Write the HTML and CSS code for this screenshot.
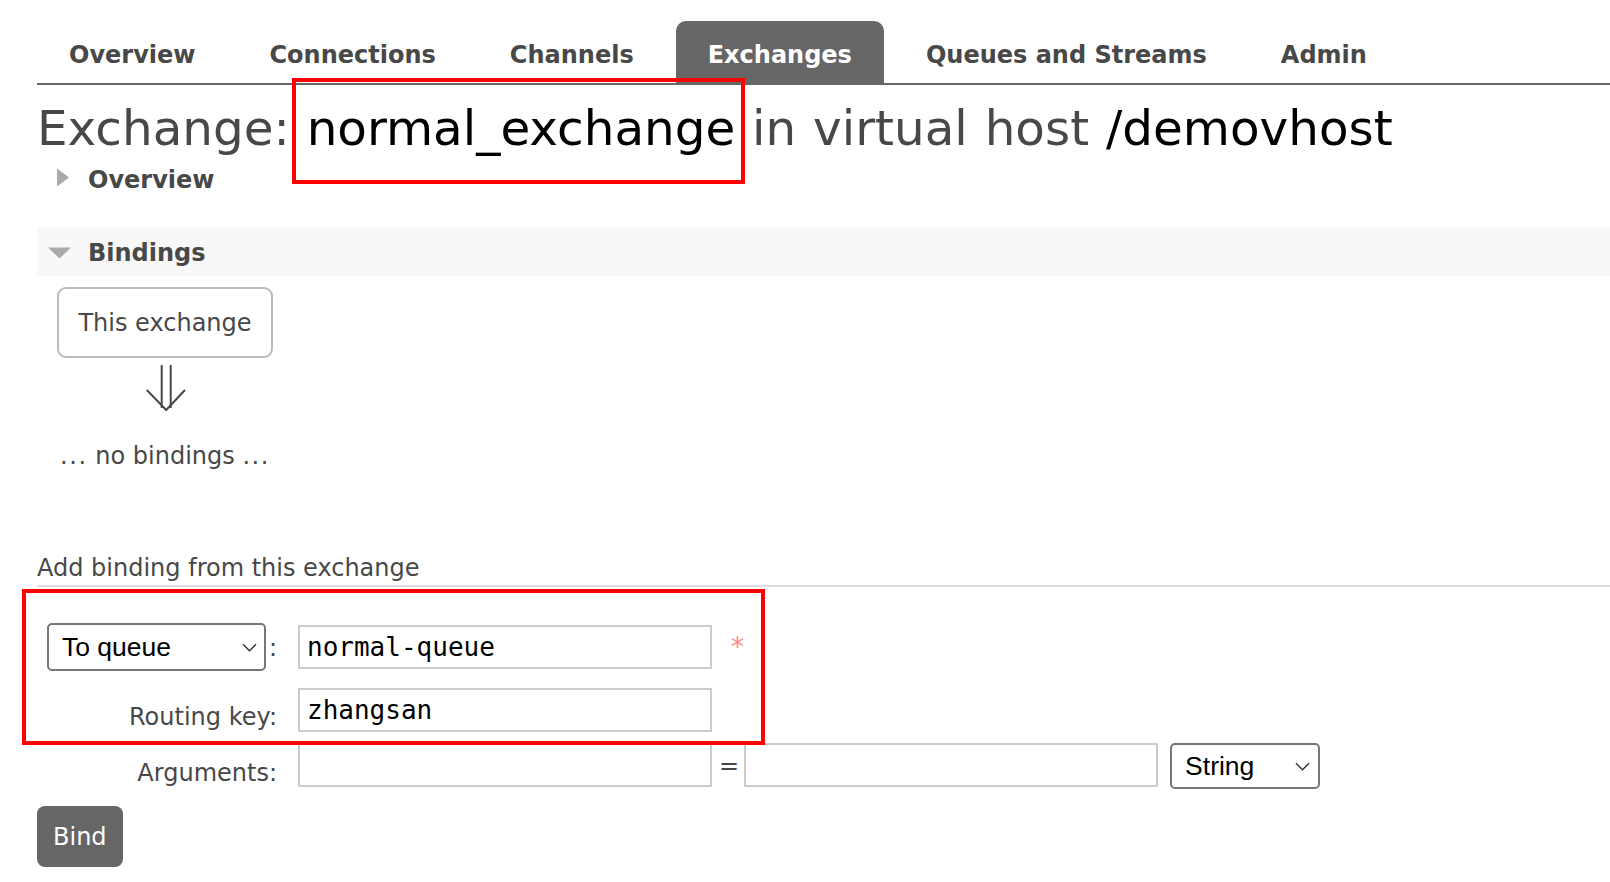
FILE: index.html
```html
<!DOCTYPE html>
<html lang="en">
<head>
<meta charset="utf-8">
<title>Exchange: normal_exchange</title>
<link rel="stylesheet" href="styles.css">
</head>
<body>
<div class="page">
  <nav class="tabs">
    <a class="tab">Overview</a>
    <a class="tab">Connections</a>
    <a class="tab">Channels</a>
    <a class="tab tab-active">Exchanges</a>
    <a class="tab">Queues and Streams</a>
    <a class="tab">Admin</a>
  </nav>

  <h1 class="title"><span class="muted">Exchange:</span> <span class="strong">normal_exchange</span> <span class="muted">in virtual host</span> <span class="strong">/demovhost</span></h1>

  <section class="section">
    <h2 class="section-head">
      <svg class="toggle" width="51" height="28" viewBox="0 0 51 28"><polygon points="20,2.5 32,11.5 20,20.5" fill="#aaa"/></svg>
      Overview
    </h2>
  </section>

  <section class="section section-open">
    <h2 class="section-head section-head-shaded">
      <svg class="toggle" width="51" height="28" viewBox="0 0 51 28"><polygon points="11,8.5 34,8.5 22.5,19.5" fill="#aaa"/></svg>
      Bindings
    </h2>

    <div class="diagram">
      <div class="node">This exchange</div>
      <svg class="flow-arrow" width="40" height="48" viewBox="0 0 40 48">
        <path d="M15.7 1V44M24.7 1V44" stroke="#484848" stroke-width="2" fill="none"/>
        <path d="M0.8 26L20.2 46L39 26" stroke="#484848" stroke-width="2" fill="none"/>
      </svg>
      <p class="empty"><span class="dots">...</span> no bindings <span class="dots">...</span></p>
    </div>

    <h3 class="sub-head">Add binding from this exchange</h3>

    <form class="form">
      <div class="row row-first">
        <div class="label"><select class="select select-dest"><option>To queue</option><option>To exchange</option></select>:</div>
        <input class="field" type="text" value="normal-queue">
        <span class="required">*</span>
      </div>
      <div class="row row-second">
        <label class="label label-text">Routing key:</label>
        <input class="field" type="text" value="zhangsan">
      </div>
      <div class="row row-third">
        <label class="label label-text label-args">Arguments:</label>
        <input class="field" type="text" value="">
        <span class="equals">=</span>
        <input class="field" type="text" value="">
        <select class="select select-type"><option>String</option><option>Number</option><option>Boolean</option><option>List</option></select>
      </div>
      <button class="btn" type="button">Bind</button>
    </form>
  </section>

  <div class="annot annot-title"></div>
  <div class="annot annot-form"></div>
</div>
</body>
</html>
```

FILE: styles.css
```css
html, body {
  margin: 0;
  padding: 0;
  background: #fff;
}

body {
  font-family: "DejaVu Sans", Verdana, sans-serif;
  font-size: 24px;
  line-height: 28px;
  color: #484848;
  overflow: hidden;
}

.page {
  position: relative;
  padding-left: 37px;
  min-height: 882px;
  box-sizing: border-box;
}

/* ---------- tabs ---------- */
.tabs {
  display: flex;
  gap: 10px;
  padding-top: 21px;
  border-bottom: 2px solid #666;
}

.tab {
  display: block;
  padding: 20px 32px 14px;
  font-weight: bold;
  font-size: 24px;
  line-height: 28px;
  color: #484848;
  white-space: nowrap;
  border-radius: 10px 10px 0 0;
}

.tab-active {
  background: #666;
  color: #fff;
}

/* ---------- title ---------- */
.title {
  margin: 17px 0 0;
  font-size: 48.4px;
  line-height: 52px;
  font-weight: normal;
  word-spacing: 1.5px;
  white-space: nowrap;
}

.title .muted { color: #484848; }
.title .strong { color: #000; }

/* ---------- sections ---------- */
.section-head {
  display: flex;
  align-items: flex-start;
  margin: 0;
  padding: 12px 0 9px;
  font-size: 24px;
  line-height: 28px;
  font-weight: bold;
  color: #484848;
}

.toggle {
  display: block;
  flex: none;
}

.section-open {
  margin-top: 24px;
}

.section-head-shaded {
  background: #f8f8f8;
}

/* ---------- bindings diagram ---------- */
.diagram {
  display: flex;
  flex-direction: column;
  align-items: center;
  width: 216px;
  margin-left: 20px;
  padding-top: 11px;
}

.node {
  width: 216px;
  box-sizing: border-box;
  border: 2px solid #bbb;
  border-radius: 9px;
  padding: 20px 0 18px;
  line-height: 29px;
  text-align: center;
}

.flow-arrow {
  display: block;
  margin-top: 6px;
  margin-left: 2px;
}

.empty {
  margin: 30px 0 0;
  white-space: nowrap;
}

.dots {
  letter-spacing: 1.6px;
}

/* ---------- add binding form ---------- */
.sub-head {
  margin: 84px 0 0;
  padding-bottom: 3px;
  font-size: 24px;
  line-height: 28px;
  font-weight: normal;
  border-bottom: 2px solid #ddd;
}

.form {
  margin: 36px 0 0;
}

.row {
  display: flex;
  align-items: flex-start;
}

.row-first {
  align-items: baseline;
}

.row-second {
  margin-top: 17px;
}

.row-third {
  margin-top: 11px;
}

.label {
  flex: none;
  width: 240px;
  margin-right: 21px;
  text-align: right;
  white-space: nowrap;
}

.label-text {
  padding-top: 15px;
}

.label-args {
  padding-top: 16px;
}

.select {
  -webkit-appearance: none;
  appearance: none;
  box-sizing: border-box;
  font-family: "Liberation Sans", Arial, sans-serif;
  font-size: 26.5px;
  color: #000;
  background-color: #fff;
  background-image: url("data:image/svg+xml;utf8,<svg xmlns='http://www.w3.org/2000/svg' width='15' height='9' viewBox='0 0 15 9'><path d='M1 1.3l6.5 6.4L14 1.3' fill='none' stroke='%23333' stroke-width='1.4'/></svg>");
  background-repeat: no-repeat;
  background-position: right 7px center;
  border: 2px solid #767676;
  border-radius: 5px;
  padding: 0 13px;
  margin: 0;
}

.select-dest {
  width: 219px;
  height: 48px;
  margin-right: 3px;
}

.select-type {
  width: 150px;
  height: 46px;
  margin-left: 12px;
  background-position: right 8px center;
}

.field {
  box-sizing: border-box;
  width: 414px;
  height: 44px;
  margin: 0;
  padding: 0 7px;
  border: 2px solid #ccc;
  border-radius: 0;
  font-family: "DejaVu Sans Mono", "Liberation Mono", monospace;
  font-size: 26px;
  color: #000;
  background: #fff;
  outline: none;
}

.required {
  margin-left: 19px;
  font-size: 26px;
  color: #f88;
}

.equals {
  align-self: center;
  margin: 0 5px 0 7px;
}

.btn {
  display: block;
  margin-top: 17px;
  height: 61px;
  padding: 0 16px;
  border: none;
  border-radius: 8px;
  background: #666;
  color: #fff;
  font-family: "DejaVu Sans", Verdana, sans-serif;
  font-size: 24px;
  line-height: 28px;
}

/* ---------- screenshot annotations ---------- */
.annot {
  position: absolute;
  box-sizing: border-box;
  border: 4px solid #f00;
  pointer-events: none;
}

.annot-title {
  left: 292px;
  top: 78px;
  width: 453px;
  height: 106px;
}

.annot-form {
  left: 22px;
  top: 589px;
  width: 743px;
  height: 156px;
}
```
